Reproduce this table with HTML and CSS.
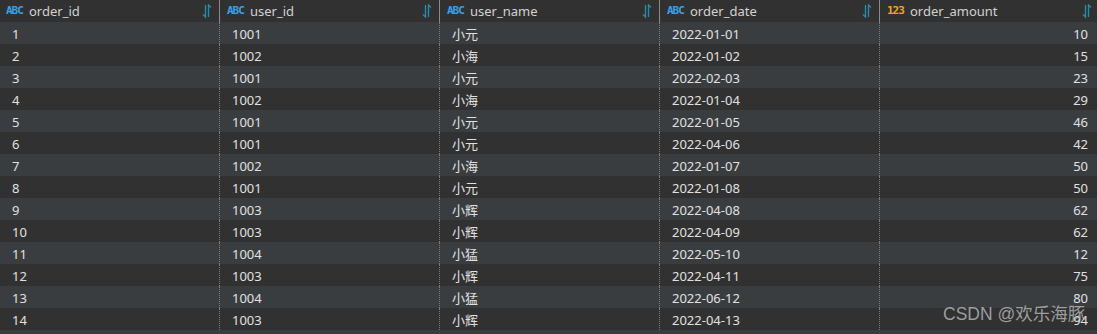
FILE: index.html
```html
<!DOCTYPE html>
<html lang="zh-CN">
<head>
    <meta charset="UTF-8">
    <title>orders</title>
    <link rel="stylesheet" href="styles.css">
</head>
<body>

    <div class="grid">
        <!-- Header -->
        <div class="row head">
            <div class="cell"><span class="type abc">ABC</span><span class="name">order_id</span><svg class="sort" viewBox="0 0 10 14"><path d="M3.5 1 V13 L1 10.5 M6.5 13 V1 L9 3.5"/></svg></div>
            <div class="cell"><span class="type abc">ABC</span><span class="name">user_id</span><svg class="sort" viewBox="0 0 10 14"><path d="M3.5 1 V13 L1 10.5 M6.5 13 V1 L9 3.5"/></svg></div>
            <div class="cell"><span class="type abc">ABC</span><span class="name">user_name</span><svg class="sort" viewBox="0 0 10 14"><path d="M3.5 1 V13 L1 10.5 M6.5 13 V1 L9 3.5"/></svg></div>
            <div class="cell"><span class="type abc">ABC</span><span class="name">order_date</span><svg class="sort" viewBox="0 0 10 14"><path d="M3.5 1 V13 L1 10.5 M6.5 13 V1 L9 3.5"/></svg></div>
            <div class="cell last"><span class="type num">123</span><span class="name">order_amount</span><svg class="sort" viewBox="0 0 10 14"><path d="M3.5 1 V13 L1 10.5 M6.5 13 V1 L9 3.5"/></svg></div>
        </div>

        <div class="row"><div class="cell">1</div><div class="cell">1001</div><div class="cell">小元</div><div class="cell">2022-01-01</div><div class="cell amount">10</div></div>
        <div class="row"><div class="cell">2</div><div class="cell">1002</div><div class="cell">小海</div><div class="cell">2022-01-02</div><div class="cell amount">15</div></div>
        <div class="row"><div class="cell">3</div><div class="cell">1001</div><div class="cell">小元</div><div class="cell">2022-02-03</div><div class="cell amount">23</div></div>
        <div class="row"><div class="cell">4</div><div class="cell">1002</div><div class="cell">小海</div><div class="cell">2022-01-04</div><div class="cell amount">29</div></div>
        <div class="row"><div class="cell">5</div><div class="cell">1001</div><div class="cell">小元</div><div class="cell">2022-01-05</div><div class="cell amount">46</div></div>
        <div class="row"><div class="cell">6</div><div class="cell">1001</div><div class="cell">小元</div><div class="cell">2022-04-06</div><div class="cell amount">42</div></div>
        <div class="row"><div class="cell">7</div><div class="cell">1002</div><div class="cell">小海</div><div class="cell">2022-01-07</div><div class="cell amount">50</div></div>
        <div class="row"><div class="cell">8</div><div class="cell">1001</div><div class="cell">小元</div><div class="cell">2022-01-08</div><div class="cell amount">50</div></div>
        <div class="row"><div class="cell">9</div><div class="cell">1003</div><div class="cell">小辉</div><div class="cell">2022-04-08</div><div class="cell amount">62</div></div>
        <div class="row"><div class="cell">10</div><div class="cell">1003</div><div class="cell">小辉</div><div class="cell">2022-04-09</div><div class="cell amount">62</div></div>
        <div class="row"><div class="cell">11</div><div class="cell">1004</div><div class="cell">小猛</div><div class="cell">2022-05-10</div><div class="cell amount">12</div></div>
        <div class="row"><div class="cell">12</div><div class="cell">1003</div><div class="cell">小辉</div><div class="cell">2022-04-11</div><div class="cell amount">75</div></div>
        <div class="row"><div class="cell">13</div><div class="cell">1004</div><div class="cell">小猛</div><div class="cell">2022-06-12</div><div class="cell amount">80</div></div>
        <div class="row"><div class="cell">14</div><div class="cell">1003</div><div class="cell">小辉</div><div class="cell">2022-04-13</div><div class="cell amount">94</div></div>
    </div>

    <!-- watermark -->
    <div class="watermark">CSDN @欢乐海豚</div>

</body>
</html>
```

FILE: styles.css
```css
* {
    box-sizing: border-box;
    margin: 0;
    padding: 0;
}

body {
    background-color: #3a3d40;
    font-family: "Noto Sans", "Noto Sans CJK SC", sans-serif;
    font-size: 13px;
    color: #e0e0e0;
    width: 1097px;
    height: 334px;
    overflow: hidden;
    position: relative;
}

.row {
    display: grid;
    grid-template-columns: 220px 220px 220px 220px 1fr;
    height: 22px;
}

.row:nth-child(even) {
    background-color: #3a3d40;
}

.row:nth-child(odd) {
    background-color: #313131;
}

.cell {
    height: 22px;
    line-height: 20px;
    padding: 2px 0 0 12px;
    border-right: 1px dotted #7c7c7c;
    white-space: nowrap;
    overflow: hidden;
}

.cell:last-child {
    border-right: none;
}

.cell.amount {
    text-align: right;
    padding-right: 9px;
}

/* Header */
.head {
    background-color: #313131;
}

.head .cell {
    display: flex;
    align-items: center;
    line-height: 22px;
    padding: 0 7px 0 7px;
    border-right: 1px solid #8a8a8a;
    color: #d2d2d2;
}

.head .cell:first-child {
    padding-left: 6px;
}

.head .cell.last {
    padding-right: 5px;
    border-right: none;
}

.type {
    font-family: "DejaVu Sans Mono", monospace;
    font-weight: bold;
    font-size: 11px;
    letter-spacing: -1px;
    width: 17px;
    margin-right: 6px;
    line-height: 12px;
}

.abc {
    color: #3aa0e6;
}

.num {
    color: #f2a41e;
}

.name {
    flex: 1;
}

.sort {
    width: 10px;
    height: 14px;
    fill: none;
    stroke: #2a8cae;
    stroke-width: 1.3;
}

/* Watermark */
.watermark {
    position: absolute;
    left: 943px;
    top: 306px;
    font-family: "Liberation Sans", "Noto Sans CJK SC", sans-serif;
    font-size: 17.5px;
    line-height: 17.5px;
    color: rgba(200, 200, 200, 0.72);
    white-space: nowrap;
}
```
